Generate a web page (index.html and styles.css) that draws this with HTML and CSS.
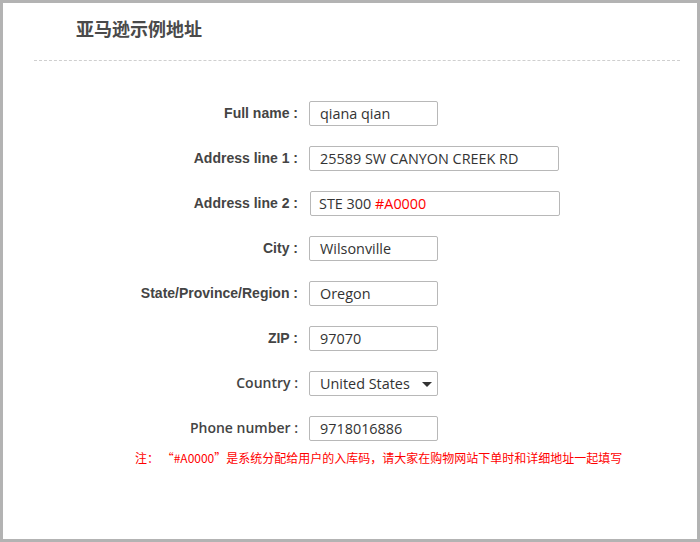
FILE: index.html
```html
<!DOCTYPE html>
<html>
<head>
<meta charset="utf-8">
<link rel="stylesheet" href="styles.css">
</head>
<body>
<div class="frame">
  <h1 class="title">亚马逊示例地址</h1>
  <div class="divider"></div>
  <div class="form">
    <div class="label">Full name :</div>
    <div class="field w-sm">qiana qian</div>

    <div class="label">Address line 1 :</div>
    <div class="field w-lg">25589 SW CANYON CREEK RD</div>

    <div class="label">Address line 2 :</div>
    <div class="field w-lg shift">STE 300 <span class="red">#A0000</span></div>

    <div class="label">City :</div>
    <div class="field w-sm">Wilsonville</div>

    <div class="label">State/Province/Region :</div>
    <div class="field w-sm">Oregon</div>

    <div class="label">ZIP :</div>
    <div class="field w-sm">97070</div>

    <div class="label alt">Country :</div>
    <div class="field w-sm select">United States<span class="arrow"></span></div>

    <div class="label alt">Phone number :</div>
    <div class="field w-sm">9718016886</div>
  </div>
  <p class="note">注： “#A0000”是系统分配给用户的入库码，请大家在购物网站下单时和详细地址一起填写</p>
</div>
</body>
</html>
```

FILE: styles.css
```css
html, body {
  margin: 0;
  padding: 0;
  background: #b3b3b3;
}
.frame {
  box-sizing: border-box;
  width: 700px;
  height: 542px;
  border: 3px solid #b3b3b3;
  background: #fff;
  overflow: hidden;
}
.title {
  margin: 0;
  padding: 12px 0 0 73px;
  height: 30px;
  font: bold 18px/26px "Noto Sans CJK SC", sans-serif;
  color: #4a4a4a;
}
.divider {
  margin: 15px 17px 0 31px;
  border-top: 1px dashed #cfcfcf;
}
.form {
  display: grid;
  grid-template-columns: 298px auto;
  column-gap: 8px;
  row-gap: 20px;
  align-items: center;
  margin-top: 40px;
}
.label {
  text-align: right;
  padding-right: 3px;
  font: bold 14px/16px "Liberation Sans", Arial, sans-serif;
  color: #444;
  white-space: nowrap;
  margin-top: -2px;
}
.label.alt {
  font: 600 14px/16px "Open Sans", sans-serif;
}
.field {
  box-sizing: border-box;
  height: 25px;
  border: 1px solid #b8b8b8;
  border-radius: 2px;
  padding: 0 10px;
  font: 14.4px/23px "Open Sans", sans-serif;
  color: #333;
  white-space: nowrap;
  position: relative;
}
.w-sm { width: 129px; }
.w-lg { width: 250px; }
.shift { margin-left: 1px; padding-left: 8px; }
.red { color: #ff0000; }
.select .arrow {
  position: absolute;
  right: 5px;
  top: 10px;
  width: 0;
  height: 0;
  border-left: 5px solid transparent;
  border-right: 5px solid transparent;
  border-top: 5px solid #333;
}
.note {
  margin: 9px 0 0 132px;
  font: 12px/16px "Noto Sans CJK SC", sans-serif;
  color: #ff0000;
}
```
